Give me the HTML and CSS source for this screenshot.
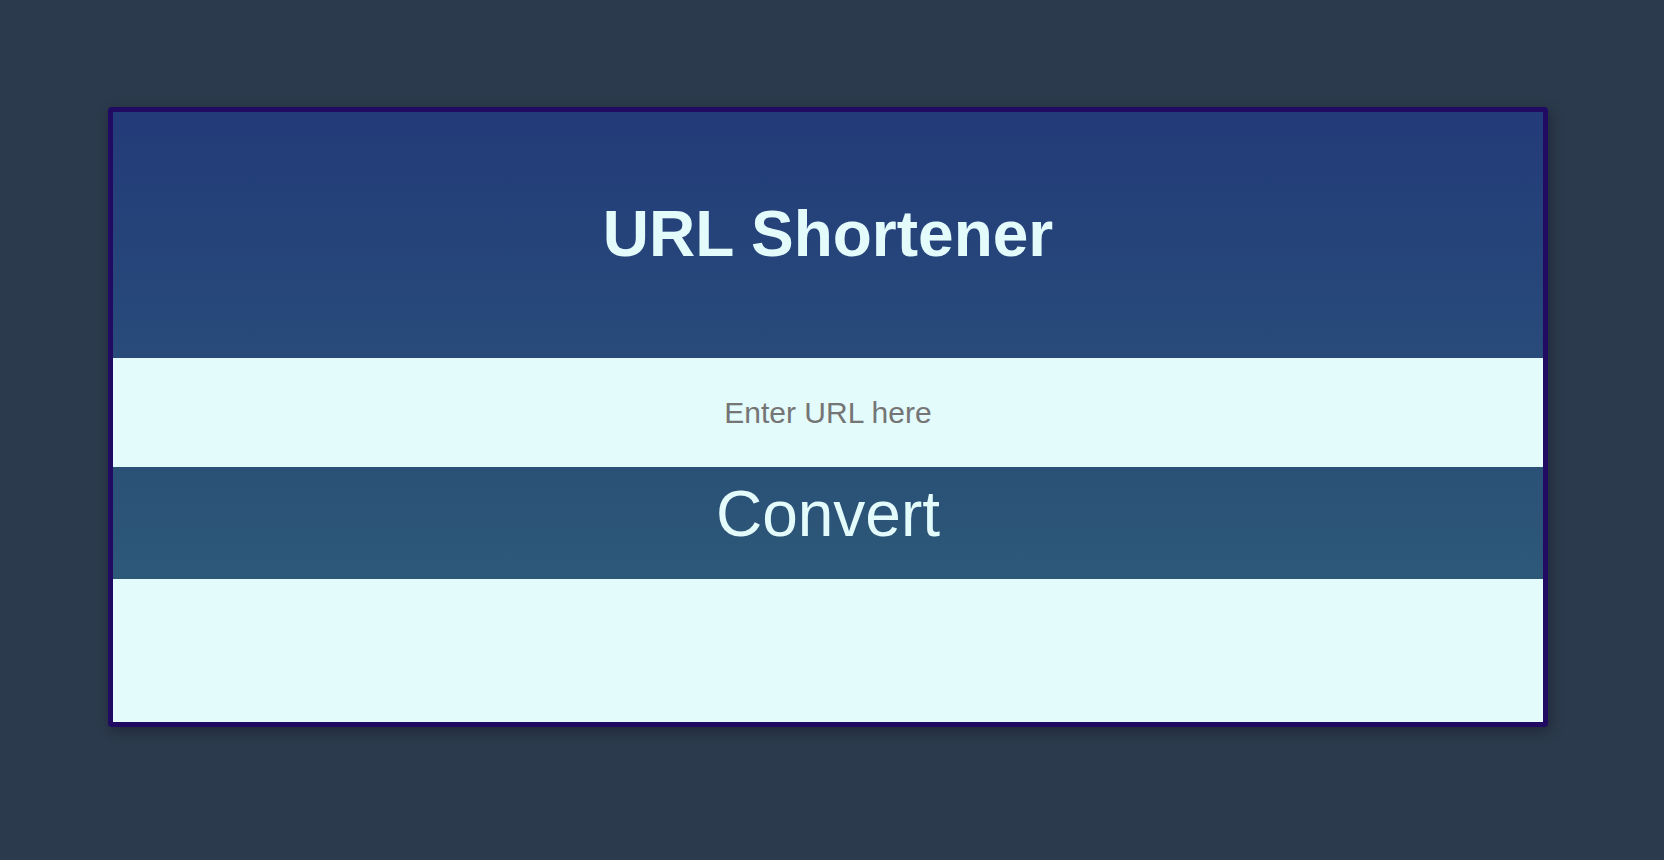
FILE: index.html
```html
<!DOCTYPE html>
<html lang="en">
<head>
<meta charset="utf-8">
<title>URL Shortener</title>
<link rel="stylesheet" href="styles.css">
</head>
<body>
<main class="page">
  <section class="card">
    <header class="card-header">
      <h1 class="title">URL Shortener</h1>
    </header>
    <input class="url-input" type="text" placeholder="Enter URL here">
    <button class="convert-btn" type="button">Convert</button>
    <div class="result"></div>
  </section>
</main>
</body>
</html>
```
FILE: styles.css
```css
html, body {
  margin: 0;
  padding: 0;
  background: #2c3a4d;
  height: 100%;
}
.page {
  padding: 107px 0 0 108px;
  font-family: "Liberation Sans", Arial, Helvetica, sans-serif;
}
.card {
  width: 1430px;
  border: 5px solid #200a62;
  border-radius: 4px;
  background: #e4fbfc;
  display: flex;
  flex-direction: column;
  box-shadow: 2px 4px 14px rgba(0, 0, 0, 0.3);
  overflow: hidden;
}
.card-header {
  box-sizing: border-box;
  height: 246px;
  display: flex;
  align-items: center;
  justify-content: center;
  background: linear-gradient(to bottom, #223b79, #284b7a);
}
.title {
  margin: 0;
  color: #e4fbfc;
  font-size: 64px;
  font-weight: 700;
  line-height: 1.15;
}
.url-input {
  display: block;
  box-sizing: border-box;
  width: 100%;
  height: 109px;
  margin: 0;
  border: none;
  outline: none;
  background: #e4fbfc;
  text-align: center;
  font-family: "Liberation Sans", Arial, Helvetica, sans-serif;
  font-size: 30px;
  color: #333;
}
.url-input::placeholder {
  color: #757575;
}
.convert-btn {
  display: block;
  width: 100%;
  margin: 0;
  border: none;
  padding: 11px 0 28px;
  background: linear-gradient(to bottom, #2a5076, #2d5979);
  color: #e4fbfc;
  font-family: "Liberation Sans", Arial, Helvetica, sans-serif;
  font-size: 64px;
  line-height: 73px;
  cursor: pointer;
}
.result {
  height: 143px;
  background: #e4fbfc;
}
```
